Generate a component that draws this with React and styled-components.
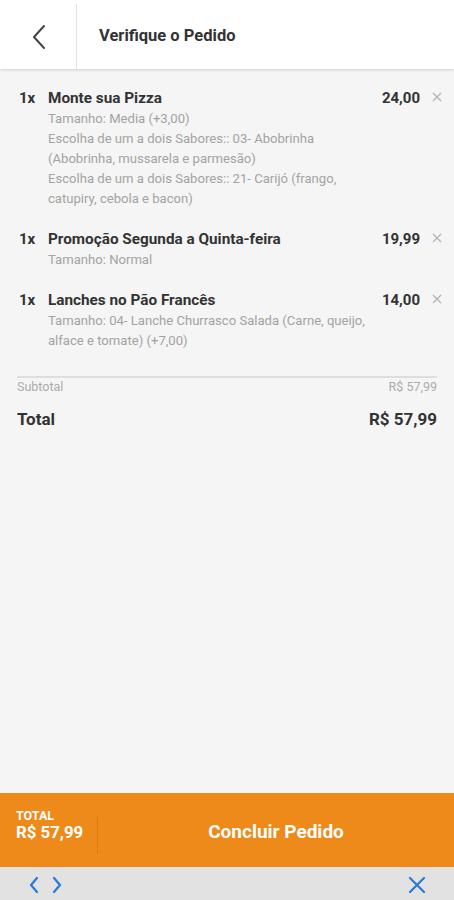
import styled, { createGlobalStyle } from "styled-components";

const GlobalStyle = createGlobalStyle`
    html, body {
        margin: 0;
        padding: 0;
        background: #f5f5f5;
    }
    * {
        box-sizing: border-box;
    }
`

const Page = styled.div`
    width: 454px;
    height: 900px;
    display: flex;
    flex-direction: column;
    background: #f5f5f5;
    font-family: Roboto, "Liberation Sans", sans-serif;
    overflow: hidden;
`

const Header = styled.header`
    height: 69px;
    flex-shrink: 0;
    display: flex;
    align-items: stretch;
    background: #fff;
    box-shadow: 0 1px 3px rgba(0, 0, 0, 0.15);
    position: relative;
    z-index: 1;
`

const BackButton = styled.button`
    width: 77px;
    border: none;
    background: transparent;
    display: flex;
    align-items: center;
    justify-content: center;
    padding: 0 0 0 2px;
    border-right: 1px solid #e2e2e2;
    margin: 4px 0 0;
`

const Title = styled.h1`
    margin: 0 0 0 22px;
    align-self: center;
    font-size: 16.5px;
    font-weight: 700;
    color: #333;
    padding-top: 2px;
`

const Content = styled.main`
    flex: 1;
    padding: 19px 12px 0 19px;
`

const Item = styled.div`
    display: grid;
    grid-template-columns: 29px 1fr 46px 22px;
    margin-bottom: 20px;
`

const Qty = styled.span`
    font-size: 15px;
    font-weight: 700;
    color: #333;
    line-height: 20px;
`

const Info = styled.div`
    padding-right: 0;
`

const Name = styled.div`
    font-size: 15.3px;
    font-weight: 700;
    color: #333;
    line-height: 20px;
    margin-bottom: 1px;
`

const Detail = styled.div`
    font-size: 13.1px;
    color: #a3a3a3;
    line-height: 20px;
`

const Price = styled.span`
    font-size: 15px;
    font-weight: 700;
    color: #333;
    line-height: 20px;
    text-align: right;
`

const Remove = styled.span`
    display: flex;
    justify-content: flex-end;
    padding-top: 4px;
`

const Summary = styled.div`
    margin: 25px 5px 0 -2px;
    border-top: 2px solid #dedede;
    padding-top: 1px;
`

const SummaryRow = styled.div`
    display: flex;
    justify-content: space-between;
    align-items: center;
    color: ${p => p.$big ? "#333" : "#acacac"};
    font-size: ${p => p.$big ? "17px" : "12.5px"};
    font-weight: ${p => p.$big ? 700 : 400};
    line-height: ${p => p.$big ? "24px" : "16px"};
    margin-top: ${p => p.$big ? "12px" : "0"};
`

const Footer = styled.footer`
    height: 74px;
    flex-shrink: 0;
    background: #ee8a1a;
    display: flex;
    align-items: stretch;
    color: #fff;
`

const FooterTotal = styled.div`
    width: 98px;
    display: flex;
    flex-direction: column;
    justify-content: center;
    padding: 0 0 0 16px;
    border-right: 1px solid #d97a12;
    margin: 24px 0 13px;
`

const FooterLabel = styled.span`
    font-size: 12.5px;
    font-weight: 700;
    line-height: 13px;
    margin-top: -20px;
`

const FooterValue = styled.span`
    font-size: 16.8px;
    font-weight: 700;
    line-height: 20px;
`

const ConfirmButton = styled.button`
    flex: 1;
    border: none;
    background: transparent;
    color: #fff;
    font-family: inherit;
    font-size: 19px;
    font-weight: 700;
    padding: 2px 0 0;
`

const NavBar = styled.nav`
    height: 33px;
    flex-shrink: 0;
    background: #e2e2e2;
    display: flex;
    align-items: center;
    padding: 2px 28px 0 28px;
    gap: 11px;
`

const NavIcon = styled.svg`
    display: block;
    margin-left: ${p => p.$push ? "auto" : "0"};
`

const items = [
    {
        name: "Monte sua Pizza",
        price: "24,00",
        details: [
            "Tamanho: Media (+3,00)",
            "Escolha de um a dois Sabores:: 03- Abobrinha (Abobrinha, mussarela e parmesão)",
            "Escolha de um a dois Sabores:: 21- Carijó (frango, catupiry, cebola e bacon)",
        ],
    },
    {
        name: "Promoção Segunda a Quinta-feira",
        price: "19,99",
        details: ["Tamanho: Normal"],
    },
    {
        name: "Lanches no Pão Francês",
        price: "14,00",
        details: ["Tamanho: 04- Lanche Churrasco Salada (Carne, queijo, alface e tomate) (+7,00)"],
    },
]

export default function App() {
    return (
        <>
            <GlobalStyle />
            <Page>
                <Header>
                    <BackButton>
                        <svg width="16" height="26" viewBox="0 0 16 26">
                            <path d="M13 2 L3 13 L13 24" fill="none" stroke="#444" strokeWidth="2" strokeLinecap="round" strokeLinejoin="round" />
                        </svg>
                    </BackButton>
                    <Title>Verifique o Pedido</Title>
                </Header>
                <Content>
                    {items.map(item => (
                        <Item key={item.name}>
                            <Qty>1x</Qty>
                            <Info>
                                <Name>{item.name}</Name>
                                {item.details.map(d => <Detail key={d}>{d}</Detail>)}
                            </Info>
                            <Price>{item.price}</Price>
                            <Remove>
                                <svg width="10" height="10" viewBox="0 0 10 10">
                                    <path d="M1 1 L9 9 M9 1 L1 9" stroke="#b4b4b4" strokeWidth="1.3" />
                                </svg>
                            </Remove>
                        </Item>
                    ))}
                    <Summary>
                        <SummaryRow>
                            <span>Subtotal</span>
                            <span>R$ 57,99</span>
                        </SummaryRow>
                        <SummaryRow $big>
                            <span>Total</span>
                            <span>R$ 57,99</span>
                        </SummaryRow>
                    </Summary>
                </Content>
                <Footer>
                    <FooterTotal>
                        <FooterLabel>TOTAL</FooterLabel>
                        <FooterValue>R$ 57,99</FooterValue>
                    </FooterTotal>
                    <ConfirmButton>Concluir Pedido</ConfirmButton>
                </Footer>
                <NavBar>
                    <NavIcon width="12" height="18" viewBox="0 0 12 18">
                        <path d="M9 2 L3 9 L9 16" fill="none" stroke="#2b78d6" strokeWidth="2.2" strokeLinecap="round" strokeLinejoin="round" />
                    </NavIcon>
                    <NavIcon width="12" height="18" viewBox="0 0 12 18">
                        <path d="M3 2 L9 9 L3 16" fill="none" stroke="#2b78d6" strokeWidth="2.2" strokeLinecap="round" strokeLinejoin="round" />
                    </NavIcon>
                    <NavIcon $push width="18" height="18" viewBox="0 0 18 18">
                        <path d="M2 2 L16 16 M16 2 L2 16" fill="none" stroke="#2b78d6" strokeWidth="2.2" strokeLinecap="round" />
                    </NavIcon>
                </NavBar>
            </Page>
        </>
    )
}
